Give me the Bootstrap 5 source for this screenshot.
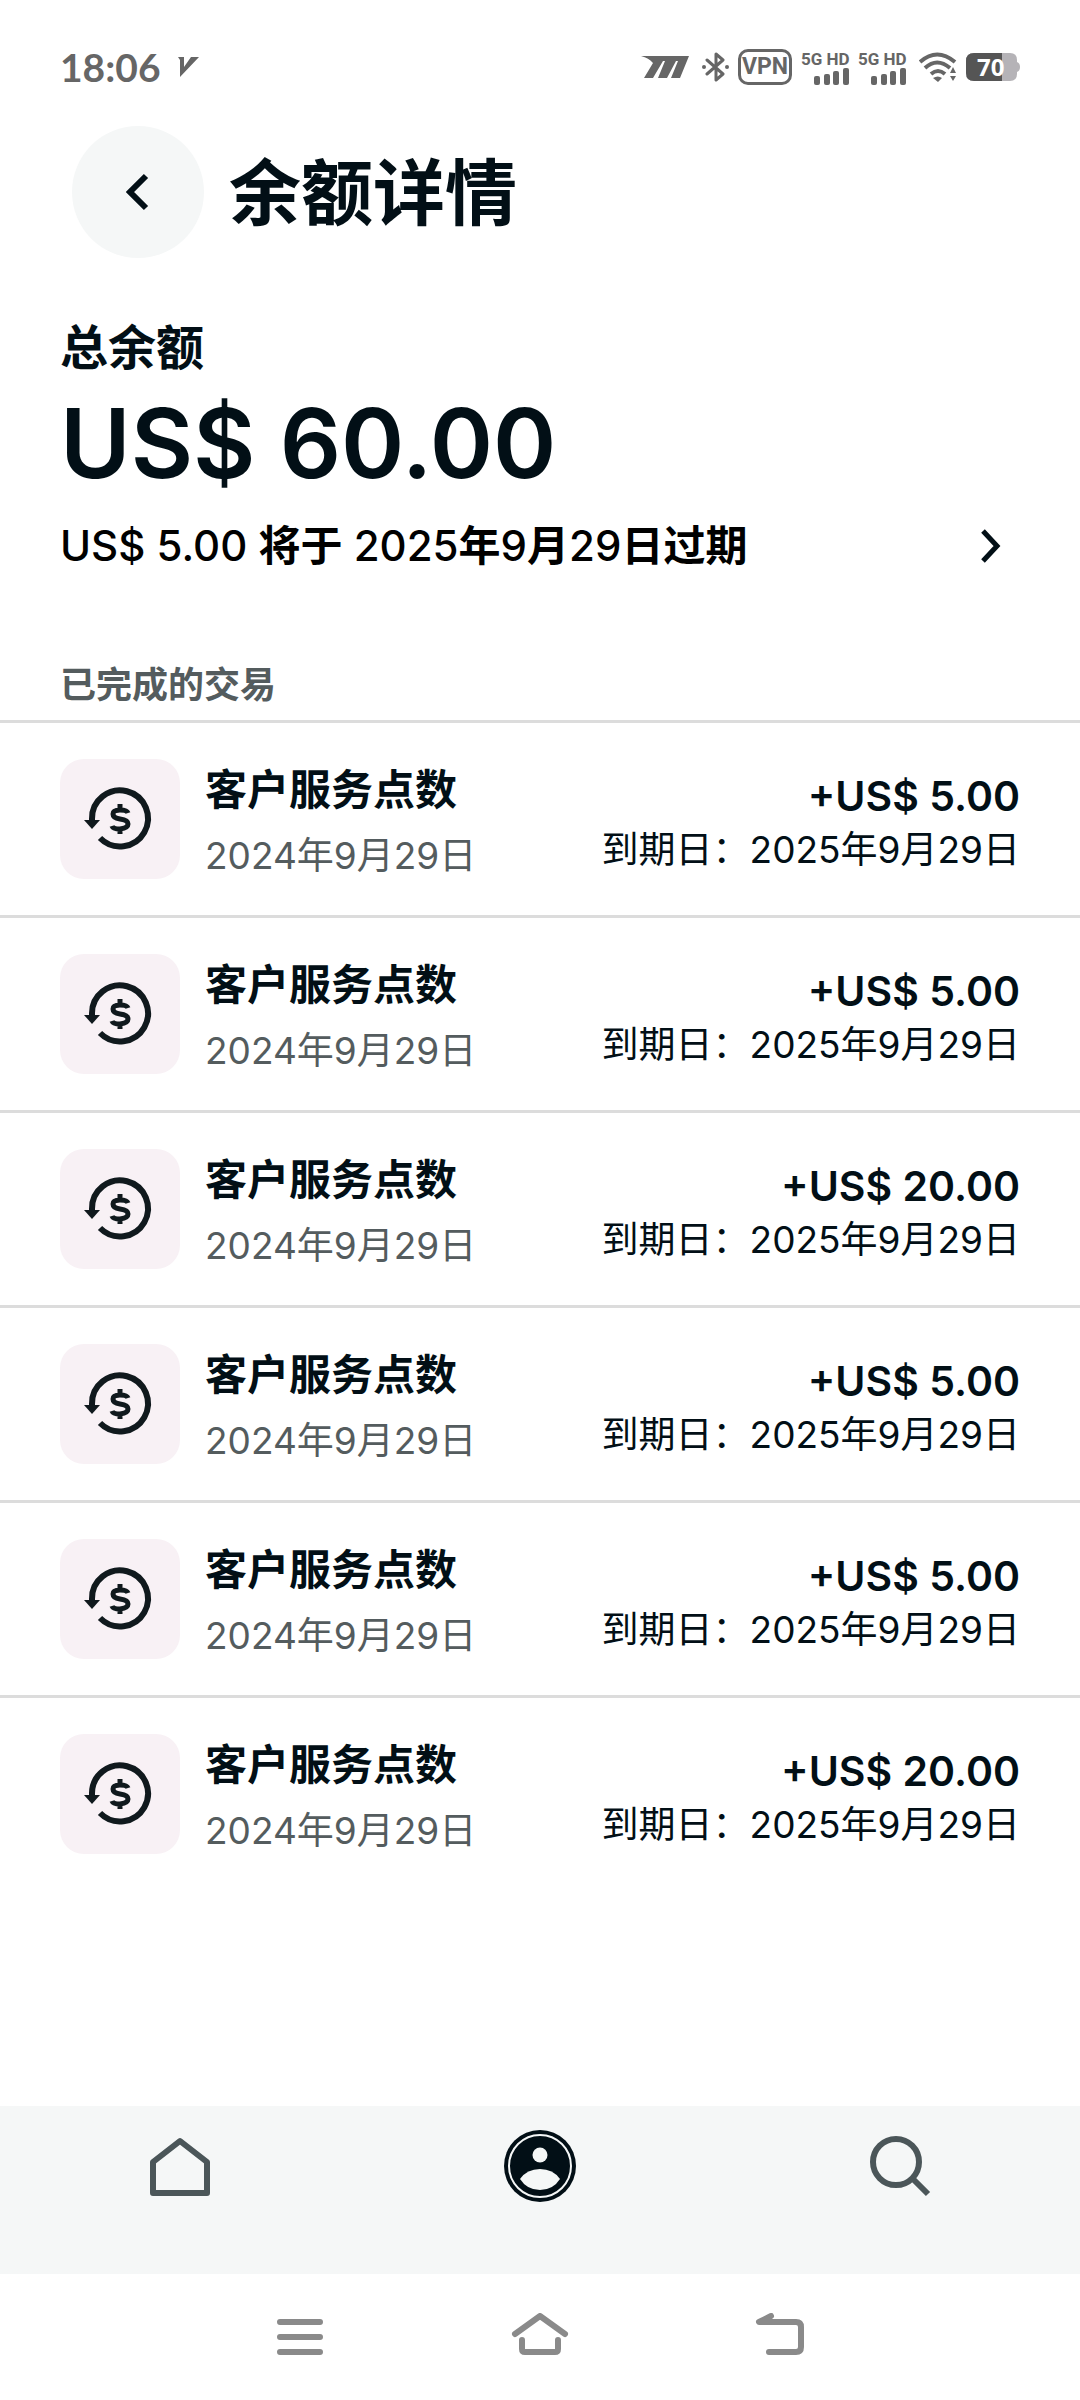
<!DOCTYPE html>
<html lang="zh-CN">
<head>
<meta charset="utf-8">
<meta name="viewport" content="width=device-width, initial-scale=1">
<title>余额详情</title>
<link href="https://cdn.jsdelivr.net/npm/bootstrap@5.3.0/dist/css/bootstrap.min.css" rel="stylesheet">
<style>
  :root { --ink: #020f16; --muted-ink: #545c5e; --rule: #dcdcdc; --soft: #f5f7f7; --sys: #666; }
  body { font-family: Inter, "Noto Sans CJK SC", sans-serif; color: var(--ink); background: #fff; }
  svg { display: block; flex: none; }
  .gutter { padding-left: 60px; padding-right: 60px; }
  .status { height: 126px; padding-top: 8px; color: var(--sys); }
  .clock { font: 700 39px/40px Lato, sans-serif; }
  .status-icons { gap: 9px; }
  .vpn { width: 54px; height: 36px; border: 3px solid; border-radius: 10px; font: 700 23px/30px Roboto, sans-serif; display: flex; justify-content: center; }
  .net { width: 48px; font: 700 17px/18px Roboto, sans-serif; white-space: nowrap; }
  .battery { width: 54px; height: 28px; }
  .battery-text { font: 700 24px/28px "Open Sans", sans-serif; color: #fff; padding-left: 11px; }
  .page-head { gap: 25px; padding-left: 72px; height: 132px; }
  .back { width: 132px; height: 132px; background: var(--soft); border: 0; }
  .page-title { font-size: 72px; line-height: 96px; font-weight: 700; margin: 0; padding-top: 2px; }
  .total-label { font-size: 48px; line-height: 60px; font-weight: 700; margin: 60px 0 0; }
  .total { font-size: 96px; line-height: 120px; font-weight: 600; margin: 5px 0 0; }
  .expiry { font-size: 42px; line-height: 60px; font-weight: 500; margin-top: 13px; color: #000; }
  .section-name { font-size: 36px; line-height: 48px; font-weight: 700; color: var(--muted-ink); margin: 85px 0 0; padding-bottom: 11px; }
  .txn { border-top: 3px solid var(--rule); height: 195px; gap: 25px; }
  .tile { width: 120px; height: 120px; border-radius: 24px; background: #f8f1f5; }
  .txn-text { padding-top: 4px; }
  .txn-name { font-size: 42px; line-height: 60px; font-weight: 700; }
  .txn-date { font-size: 37px; line-height: 54px; color: var(--muted-ink); margin-top: 9px; }
  .txn-sum { padding-top: 7px; }
  .amount { font-size: 41px; line-height: 54px; font-weight: 600; }
  .due { font-size: 37px; line-height: 54px; }
  .tabs { background: var(--soft); height: 168px; padding-top: 24px; color: #4b5659; }
  .tabs a { color: inherit; height: 72px; }
  .sysnav { height: 126px; color: #8a8a8a; gap: 160px; }
  .sysnav button { background: none; border: 0; padding: 0; color: inherit; width: 80px; }
</style>
</head>
<body>
<svg class="d-none">
  <symbol id="refund" viewBox="0 0 120 120">
    <path d="M32 62V60A28 28 0 1 1 40 79" fill="none" stroke="#10191d" stroke-width="6"/>
    <path d="M24 61h16l-8 9z" fill="#10191d"/>
    <path d="M68 54q-1-3-8-3-7 0-7 4 0 4 7 5 8 1 8 5t-8 5q-7 0-8-3M60 45v6M60 69v6" fill="none" stroke="#10191d" stroke-width="5"/>
  </symbol>
  <symbol id="bars" viewBox="0 0 35 17">
    <g fill="currentColor"><rect y="8" width="6" height="9" rx="2"/><rect x="10" y="6" width="6" height="11" rx="2"/><rect x="19" y="3" width="6" height="14" rx="2"/><rect x="29" width="6" height="17" rx="2"/></g>
  </symbol>
</svg>
<div class="min-vh-100 d-flex flex-column">
  <header class="status gutter d-flex align-items-center">
    <span class="clock">18:06</span>
    <svg class="ms-3" width="22" height="22" viewBox="0 0 22 22"><path d="M1 1h6v10L14 1h8L3 21V4z" fill="currentColor"/></svg>
    <div class="status-icons ms-auto d-flex align-items-center">
      <svg class="me-1" width="48" height="22" viewBox="0 0 48 22"><path d="M0 0H48L39 22H30L37 5h-2L26 22H17L24 5h-2L12 22H3L12 7Q8 2 0 0z" fill="currentColor"/></svg>
      <svg width="27" height="30" viewBox="0 0 27 30"><path d="M5 8l16 14-7 6V2l7 6L5 22" fill="none" stroke="currentColor" stroke-width="3" stroke-linejoin="round" stroke-linecap="round"/><circle cx="2" cy="15" r="2" fill="currentColor"/><circle cx="25" cy="15" r="2" fill="currentColor"/></svg>
      <span class="vpn">VPN</span>
      <div class="net">5G HD<svg class="ms-auto" width="35" height="17"><use href="#bars"/></svg></div>
      <div class="net">5G HD<svg class="ms-auto" width="35" height="17"><use href="#bars"/></svg></div>
      <svg class="ms-1" width="38" height="30" viewBox="0 0 38 30"><g fill="none" stroke="currentColor" stroke-width="4"><path d="M1 10q17-15 35 0"/><path d="M6 16q12-11 25 0"/><path d="M12 22q7-6 14 0"/></g><path d="M14 26q5-3 9 0l-4 4z M34 15l3 6h-6z M34 29l3-5h-6z" fill="currentColor"/></svg>
      <div class="battery position-relative">
        <svg class="position-absolute top-0 start-0" width="54" height="28" viewBox="0 0 54 28"><path d="M8 0H44q7 0 7 7v2q3 1 3 5t-3 5v2q0 7-7 7H8q-8 0-8-8V8Q0 0 8 0" fill="#b5b3b7"/><path d="M8 0H36V28H8q-8 0-8-8V8Q0 0 8 0" fill="#555"/></svg>
        <div class="battery-text position-relative">70</div>
      </div>
    </div>
  </header>
  <div class="page-head d-flex align-items-center">
    <button class="back rounded-circle d-flex align-items-center justify-content-center p-0" aria-label="返回"><svg width="24" height="38" viewBox="0 0 24 38"><path d="M20 3L4 19l16 16" fill="none" stroke="#020f16" stroke-width="6"/></svg></button>
    <h1 class="page-title">余额详情</h1>
  </div>
  <main class="flex-grow-1">
    <section class="gutter">
      <h2 class="total-label">总余额</h2>
      <p class="total">US$ 60.00</p>
      <a href="#" class="expiry d-flex align-items-center justify-content-between text-decoration-none"><span>US$ 5.00 <b>将于</b> 2025<b>年</b>9<b>月</b>29<b>日过期</b></span><svg class="me-3" width="26" height="34" viewBox="0 0 26 34"><path d="M5 2l14 15L5 32" fill="none" stroke="#020f16" stroke-width="5"/></svg></a>
      <h2 class="section-name">已完成的交易</h2>
    </section>
    <ul class="list-unstyled m-0">
      <li class="txn gutter d-flex align-items-center"><span class="tile"><svg width="120" height="120"><use href="#refund"/></svg></span><div class="txn-text"><div class="txn-name">客户服务点数</div><div class="txn-date">2024年9月29日</div></div><div class="txn-sum ms-auto text-end"><div class="amount">+US$ 5.00</div><div class="due">到期日：2025年9月29日</div></div></li>
      <li class="txn gutter d-flex align-items-center"><span class="tile"><svg width="120" height="120"><use href="#refund"/></svg></span><div class="txn-text"><div class="txn-name">客户服务点数</div><div class="txn-date">2024年9月29日</div></div><div class="txn-sum ms-auto text-end"><div class="amount">+US$ 5.00</div><div class="due">到期日：2025年9月29日</div></div></li>
      <li class="txn gutter d-flex align-items-center"><span class="tile"><svg width="120" height="120"><use href="#refund"/></svg></span><div class="txn-text"><div class="txn-name">客户服务点数</div><div class="txn-date">2024年9月29日</div></div><div class="txn-sum ms-auto text-end"><div class="amount">+US$ 20.00</div><div class="due">到期日：2025年9月29日</div></div></li>
      <li class="txn gutter d-flex align-items-center"><span class="tile"><svg width="120" height="120"><use href="#refund"/></svg></span><div class="txn-text"><div class="txn-name">客户服务点数</div><div class="txn-date">2024年9月29日</div></div><div class="txn-sum ms-auto text-end"><div class="amount">+US$ 5.00</div><div class="due">到期日：2025年9月29日</div></div></li>
      <li class="txn gutter d-flex align-items-center"><span class="tile"><svg width="120" height="120"><use href="#refund"/></svg></span><div class="txn-text"><div class="txn-name">客户服务点数</div><div class="txn-date">2024年9月29日</div></div><div class="txn-sum ms-auto text-end"><div class="amount">+US$ 5.00</div><div class="due">到期日：2025年9月29日</div></div></li>
      <li class="txn gutter d-flex align-items-center"><span class="tile"><svg width="120" height="120"><use href="#refund"/></svg></span><div class="txn-text"><div class="txn-name">客户服务点数</div><div class="txn-date">2024年9月29日</div></div><div class="txn-sum ms-auto text-end"><div class="amount">+US$ 20.00</div><div class="due">到期日：2025年9月29日</div></div></li>
    </ul>
  </main>
  <nav class="tabs row g-0 align-content-start">
    <a href="#" class="col d-flex align-items-center justify-content-center" aria-label="首页"><svg width="72" height="72" viewBox="0 0 72 72"><path d="M9 32L36 11l27 21v31H9z" fill="none" stroke="currentColor" stroke-width="6" stroke-linejoin="round"/></svg></a>
    <a href="#" class="col d-flex align-items-center justify-content-center" aria-label="账户"><svg width="72" height="72" viewBox="0 0 72 72"><circle cx="36" cy="36" r="36" fill="#020f16"/><circle cx="36" cy="36" r="31" fill="none" stroke="#f5f7f7" stroke-width="2"/><circle cx="36" cy="25" r="7.500" fill="#f5f7f7"/><path d="M16 49q7-10 20-10t20 10q-7 11-20 11T16 49" fill="#f5f7f7"/></svg></a>
    <a href="#" class="col d-flex align-items-center justify-content-center" aria-label="搜索"><svg width="72" height="72" viewBox="0 0 72 72"><circle cx="32" cy="32" r="23" fill="none" stroke="currentColor" stroke-width="6"/><path d="M48 48l16 16" stroke="currentColor" stroke-width="6"/></svg></a>
  </nav>
  <nav class="sysnav d-flex justify-content-center align-items-center">
    <button aria-label="菜单"><svg class="mx-auto" width="48" height="48" viewBox="0 0 48 48"><path d="M4 9h40M4 24h40M4 39h40" stroke="currentColor" stroke-width="6" stroke-linecap="round"/></svg></button>
    <button aria-label="主页"><svg class="mx-auto" width="60" height="48" viewBox="0 0 60 48"><path d="M5 21L30 3l25 18M12 27v9q0 3 3 3h30q3 0 3-3v-9" fill="none" stroke="currentColor" stroke-width="6" stroke-linecap="round" stroke-linejoin="round"/></svg></button>
    <button aria-label="后退"><svg class="mx-auto" width="52" height="48" viewBox="0 0 52 48"><path d="M17 3L5 9h37q5 0 5 5v20q0 5-5 5H15" fill="none" stroke="currentColor" stroke-width="6" stroke-linecap="round" stroke-linejoin="round"/></svg></button>
  </nav>
</div>
<script src="https://cdn.jsdelivr.net/npm/bootstrap@5.3.0/dist/js/bootstrap.bundle.min.js"></script>
</body>
</html>
